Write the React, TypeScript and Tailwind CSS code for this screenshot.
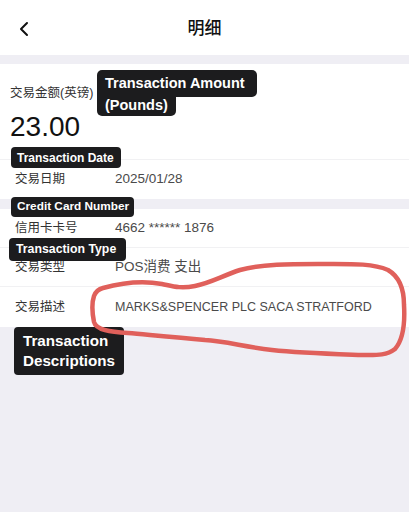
import React from "react";

const cjk = { fontFamily: '"Liberation Sans", "Noto Sans CJK SC", sans-serif' };

function Row({ label, value, border = true }: { label: string; value: string; border?: boolean }) {
  return (
    <div className={`flex items-center h-[39px] pl-[15px] ${border ? "border-b border-[#f1f1f3]" : ""}`}>
      <div className="w-[100px] text-[12.5px] text-[#333333]">{label}</div>
      <div className="text-[13.5px] text-[#4a4a4a]">{value}</div>
    </div>
  );
}

function Tag({ children, className }: { children: React.ReactNode; className: string }) {
  return (
    <div
      className={`absolute bg-[#1c1c1e] text-white font-bold rounded-[4px] leading-none flex items-center ${className}`}
    >
      {children}
    </div>
  );
}

export default function App() {
  return (
    <div className="relative w-[409px] h-[512px] bg-[#efeef4] overflow-hidden" style={cjk}>
      {/* header */}
      <div className="h-[55px] bg-white grid grid-cols-[60px_1fr_60px] items-center">
        <div className="pl-[18px] pt-[2px]">
          <svg width="12" height="16" viewBox="0 0 12 16">
            <path d="M9 2 L3 8 L9 14" fill="none" stroke="#111" strokeWidth="2" strokeLinecap="round" strokeLinejoin="round" />
          </svg>
        </div>
        <div className="text-center text-[17px] font-medium text-[#111] pt-[2px]">明细</div>
        <div />
      </div>
      <div className="h-[9px]" />

      {/* amount section */}
      <div className="bg-white">
        <div className="h-[96px] pl-[10px] pt-[20px] border-b border-[#f1f1f3]">
          <div className="text-[12.5px] text-[#333333] leading-[18px]">交易金额(英镑)</div>
          <div className="text-[28px] text-[#111] leading-[32px] mt-[9px]">23.00</div>
        </div>
        <Row label="交易日期" value="2025/01/28" border={false} />
      </div>
      <div className="h-[10px]" />

      {/* details */}
      <div className="bg-white">
        <Row label="信用卡卡号" value="4662 ****** 1876" />
        <Row label="交易类型" value="POS消费 支出" />
        <div className="flex items-center h-[40px] pl-[15px]">
          <div className="w-[100px] text-[12.5px] text-[#333333]">交易描述</div>
          <div className="text-[12.5px] text-[#4a4a4a]">MARKS&amp;SPENCER PLC SACA STRATFORD</div>
        </div>
      </div>

      {/* annotations */}
      <div className="absolute left-[97px] top-[70px] text-white font-bold text-[14.5px]">
        <div className="bg-[#1c1c1e] rounded-t-[5px] rounded-br-[5px] w-[160px] h-[27px] pl-[8px] pt-[6px] leading-none">
          Transaction Amount
        </div>
        <div className="bg-[#1c1c1e] rounded-b-[5px] w-[79px] h-[19px] pl-[8px] leading-none pt-[1px]">
          (Pounds)
        </div>
      </div>
      <Tag className="left-[11px] top-[147px] w-[110px] h-[21px] pl-[6px] text-[12px]">Transaction Date</Tag>
      <Tag className="left-[11px] top-[197px] w-[123px] h-[20px] pl-[6px] text-[11.8px]">Credit Card Number</Tag>
      <Tag className="left-[9px] top-[238px] w-[117px] h-[23px] pl-[7px] text-[12.3px]">Transaction Type</Tag>
      <div className="absolute left-[14px] top-[327px] w-[110px] h-[48px] bg-[#1c1c1e] rounded-[4px] text-white font-bold text-[15.2px] leading-[20px] pl-[9px] pt-[4px]">
        <div>Transaction</div>
        <div>Descriptions</div>
      </div>

      {/* red loop */}
      <svg className="absolute left-0 top-0 pointer-events-none" width="409" height="512" viewBox="0 0 409 512">
        <path
          d="M103 288 C125 282 145 281 162 284 C172 286 180 289 195 286 C210 283 222 276 240 270 C262 264 290 264 318 264 C350 264 372 263 388 270 C400 277 404 290 404 305 C405 322 403 340 395 349 C386 356 375 355 362 355 C335 354 300 353 272 350 C245 347 225 341 205 340 C175 337 150 335 128 333 C110 332 96 330 94 322 C92 312 92 302 94 296 C96 291 99 289 103 288 Z"
          fill="none"
          stroke="#e0605b"
          strokeWidth="4.5"
          strokeLinejoin="round"
        />
      </svg>
    </div>
  );
}
